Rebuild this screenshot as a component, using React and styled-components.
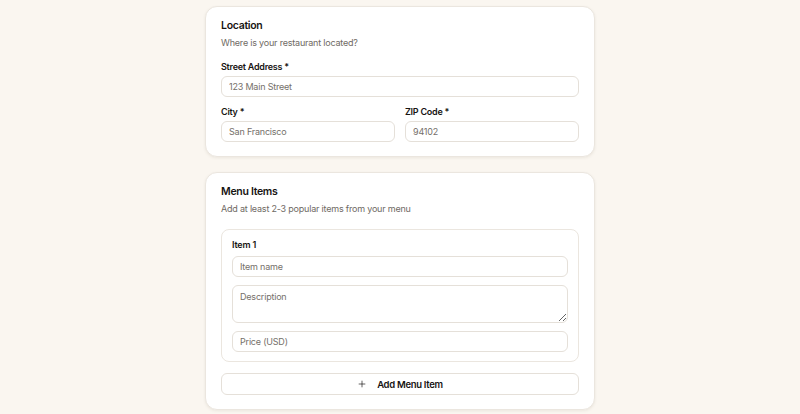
import React from "react";
import styled, { createGlobalStyle } from "styled-components";
import { Plus } from "lucide-react";

const GlobalStyle = createGlobalStyle`
  html, body {
    margin: 0;
    padding: 0;
    background: #faf6f0;
    font-family: Inter, "Noto Sans", sans-serif;
    color: #1c1917;
  }
`;

const Page = styled.main`
  display: flex;
  flex-direction: column;
  align-items: center;
  gap: 15px;
  padding-top: 6px;
  min-height: 414px;
  box-sizing: border-box;
`;

const Card = styled.section`
  width: 390px;
  box-sizing: border-box;
  background: #ffffff;
  border: 1px solid #ebe6df;
  border-radius: 12px;
  box-shadow: 0 1px 3px rgba(60, 45, 20, 0.08);
  padding: 12px 15px 14px;
  display: flex;
  flex-direction: column;
`;

const Title = styled.h2`
  margin: 0;
  font-size: 10.5px;
  line-height: 13px;
  font-weight: 600;
  letter-spacing: -0.3px;
  color: #171412;
`;

const Description = styled.p`
  margin: 4px 0 0;
  font-size: 9px;
  line-height: 13px;
  letter-spacing: -0.2px;
  color: #6f6a64;
`;

const Fields = styled.div`
  display: flex;
  flex-direction: column;
  gap: 8px;
  margin-top: 11px;
`;

const Row = styled.div`
  display: grid;
  grid-template-columns: 1fr 1fr;
  gap: 10px;
`;

const Field = styled.label`
  display: flex;
  flex-direction: column;
  gap: 3px;
`;

const Label = styled.span`
  font-size: 9px;
  line-height: 13px;
  font-weight: 600;
  letter-spacing: -0.25px;
  color: #171412;
`;

const Input = styled.input`
  box-sizing: border-box;
  width: 100%;
  height: 21px;
  border: 1px solid #e5e0d9;
  border-radius: 6px;
  background: #ffffff;
  padding: 0 7px;
  font-family: inherit;
  font-size: 9px;
  letter-spacing: -0.2px;
  color: #6b6661;
  outline: none;
  &::placeholder {
    color: #75706a;
  }
`;

const TextArea = styled.textarea`
  box-sizing: border-box;
  width: 100%;
  height: 38px;
  border: 1px solid #e5e0d9;
  border-radius: 6px;
  background: #ffffff;
  padding: 5px 7px;
  font-family: inherit;
  font-size: 9px;
  letter-spacing: -0.2px;
  color: #6b6661;
  resize: vertical;
  outline: none;
  display: block;
  &::placeholder {
    color: #75706a;
  }
`;

const ItemBox = styled.div`
  margin-top: 14px;
  border: 1px solid #ebe6df;
  border-radius: 8px;
  padding: 8px 10px 9px;
  display: flex;
  flex-direction: column;
  gap: 8px;
`;

const ItemTitle = styled.h3`
  margin: 0 0 -3px;
  font-size: 9px;
  line-height: 13px;
  font-weight: 600;
  letter-spacing: -0.2px;
  color: #171412;
`;

const AddButton = styled.button`
  margin-top: 11px;
  height: 22px;
  box-sizing: border-box;
  border: 1px solid #e5e0d9;
  border-radius: 6px;
  background: #ffffff;
  display: flex;
  align-items: center;
  justify-content: center;
  gap: 10px;
  font-family: inherit;
  font-size: 9.5px;
  font-weight: 600;
  letter-spacing: -0.3px;
  color: #171412;
  cursor: pointer;
`;

const App = () => {
  return (
    <>
      <GlobalStyle />
      <Page>
        {/* Location card */}
        <Card>
          <Title>Location</Title>
          <Description>Where is your restaurant located?</Description>
          <Fields>
            <Field>
              <Label>Street Address *</Label>
              <Input placeholder="123 Main Street" />
            </Field>
            <Row>
              <Field>
                <Label>City *</Label>
                <Input placeholder="San Francisco" />
              </Field>
              <Field>
                <Label>ZIP Code *</Label>
                <Input placeholder="94102" />
              </Field>
            </Row>
          </Fields>
        </Card>

        {/* Menu items card */}
        <Card>
          <Title>Menu Items</Title>
          <Description>Add at least 2-3 popular items from your menu</Description>
          <ItemBox>
            <ItemTitle>Item 1</ItemTitle>
            <Input placeholder="Item name" />
            <TextArea placeholder="Description" />
            <Input placeholder="Price (USD)" />
          </ItemBox>
          <AddButton type="button">
            <Plus size={10} strokeWidth={1.6} />
            Add Menu Item
          </AddButton>
        </Card>
      </Page>
    </>
  );
};

export default App;
